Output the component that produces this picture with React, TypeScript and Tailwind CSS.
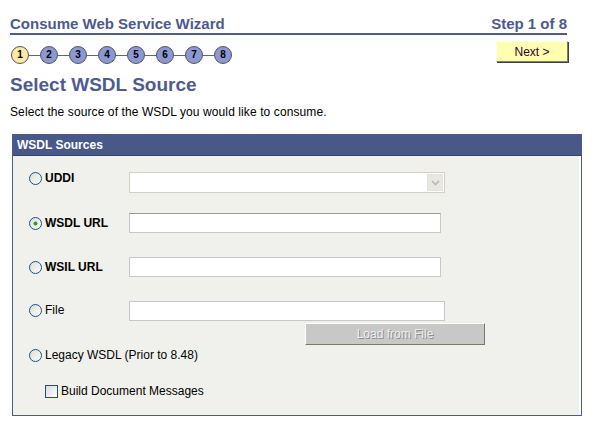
import React from "react";

const steps = [1, 2, 3, 4, 5, 6, 7, 8];

function Radio({ checked }: { checked?: boolean }) {
  return (
    <svg width="13" height="13" viewBox="0 0 13 13" className="shrink-0">
      <defs>
        <linearGradient id={checked ? "rg1" : "rg0"} x1="0" y1="0" x2="1" y2="1">
          <stop offset="0" stopColor="#dcdcd4" />
          <stop offset="1" stopColor="#ffffff" />
        </linearGradient>
      </defs>
      <circle cx="6.5" cy="6.5" r="6" fill={`url(#${checked ? "rg1" : "rg0"})`} stroke="#1c5180" strokeWidth="1" />
      {checked && <circle cx="6.5" cy="6.5" r="2" fill="#21a121" />}
    </svg>
  );
}

function Checkbox() {
  return (
    <span className="block h-[13px] w-[13px] shrink-0 border border-[#1c5180] bg-gradient-to-br from-[#dcdcd4] to-white" />
  );
}

function Label({ children, checked, bold = true }: { children: React.ReactNode; checked?: boolean; bold?: boolean }) {
  return (
    <div className="flex h-[14px] w-[100px] shrink-0 items-center gap-[3px]">
      <Radio checked={checked} />
      <span className={bold ? "font-bold text-[12px] leading-[14px] text-black" : "text-[12px] leading-[14px] text-black"}>
        {children}
      </span>
    </div>
  );
}

export default function App() {
  return (
    <div className="h-[431px] w-[610px] overflow-hidden bg-white font-['Liberation_Sans',Arial,sans-serif] text-black">
      <div className="ml-[10px] w-[557px] pt-[15px]">
        <div className="flex items-end justify-between border-b-2 border-[#4c5a8c] pb-[1px] text-[15px] font-bold leading-[17px] text-[#4c5a8c]">
          <span>Consume Web Service Wizard</span>
          <span>Step 1 of 8</span>
        </div>

        <div className="mt-[6px] flex items-start justify-between">
          <div className="ml-[1px] mt-[5px] flex items-center">
            {steps.map((n, i) => (
              <div key={n} className="flex items-center">
                {i > 0 && <span className="block h-px w-[11px] bg-[#666]" />}
                <span
                  className={
                    n === 1
                      ? "flex h-[18px] w-[18px] items-center justify-center rounded-full border border-[#555] bg-[#fde9a4] text-[10px] font-bold leading-none"
                      : "flex h-[18px] w-[18px] items-center justify-center rounded-full border border-[#555] bg-[#8c98d4] text-[10px] font-bold leading-none"
                  }
                >
                  {n}
                </span>
              </div>
            ))}
          </div>
          <button className="mr-[-1px] flex h-[21px] w-[72px] items-center justify-center border border-b-[#808060] border-l-[#fffff0] border-r-[#808060] border-t-[#fffff0] bg-[#ffffb0] text-[12px] text-[#300030] shadow-[1px_1px_0_#404040]">
            Next &gt;
          </button>
        </div>

        <h1 className="mt-[9px] text-[19px] font-bold leading-[23px] text-[#4f5b8e]">Select WSDL Source</h1>
        <p className="mt-[9px] text-[12px] leading-[14px] tracking-[0.1px]">
          Select the source of the WSDL you would like to consume.
        </p>
      </div>

      <div className="ml-[12px] mt-[15px] flex h-[282px] w-[570px] flex-col border border-[#4c5a8c] bg-white">
        <div className="flex h-[21px] shrink-0 items-center border-b border-[#34426e] bg-[#485889] pl-[4px] text-[12px] font-bold text-white">
          WSDL Sources
        </div>
        <div className="mr-[2px] flex-1 bg-[#f0f1ec] pl-[16px]">
          {/* UDDI */}
          <div className="mt-[16px] flex items-start">
            <div className="-mt-[1px]">
              <Label>UDDI</Label>
            </div>
            <div className="flex h-[21px] w-[316px] items-center border border-[#d4d0c8] bg-[#fffff8] p-[1px]">
              <div className="h-full flex-1 bg-white" />
              <div className="flex h-[17px] w-[16px] items-center justify-center border border-[#e4e4dc] bg-[#e8e8e0]">
                <svg width="9" height="6" viewBox="0 0 9 6">
                  <path d="M1 1 L4.5 4.5 L8 1" fill="none" stroke="#b8b8b0" strokeWidth="1.6" />
                </svg>
              </div>
            </div>
          </div>

          {/* WSDL URL */}
          <div className="mt-[20px] flex items-start">
            <div className="mt-[3px]">
              <Label checked>WSDL URL</Label>
            </div>
            <div className="h-[20px] w-[312px] border border-[#c8c8c8] border-t-[#999] bg-white" />
          </div>

          {/* WSIL URL */}
          <div className="mt-[24px] flex items-start">
            <div className="mt-[3px]">
              <Label>WSIL URL</Label>
            </div>
            <div className="h-[20px] w-[312px] border border-[#c8c8c8] bg-white" />
          </div>

          {/* File */}
          <div className="mt-[24px] flex items-start">
            <div className="mt-[2px]">
              <Label bold={false}>File</Label>
            </div>
            <div className="h-[20px] w-[316px] border border-[#c8c8c8] bg-white" />
          </div>

          <div className="mt-[2px] flex">
            <button
              disabled
              className="ml-[276px] flex h-[22px] w-[180px] items-center justify-center border border-b-[#7a7868] border-l-white border-r-[#7a7868] border-t-white bg-[#c8c8c8] text-[12px] text-[#eeeeee] [text-shadow:1px_1px_0_#8c8c8c]"
            >
              Load from File
            </button>
          </div>

          {/* Legacy */}
          <div className="mt-[3px] flex">
            <div className="flex h-[14px] items-center gap-[3px]">
              <Radio />
              <span className="text-[12px] leading-[14px]">Legacy WSDL (Prior to 8.48)</span>
            </div>
          </div>

          <div className="ml-[16px] mt-[22px] flex h-[14px] items-center gap-[3px]">
            <Checkbox />
            <span className="text-[12px] leading-[14px]">Build Document Messages</span>
          </div>
        </div>
      </div>
    </div>
  );
}
